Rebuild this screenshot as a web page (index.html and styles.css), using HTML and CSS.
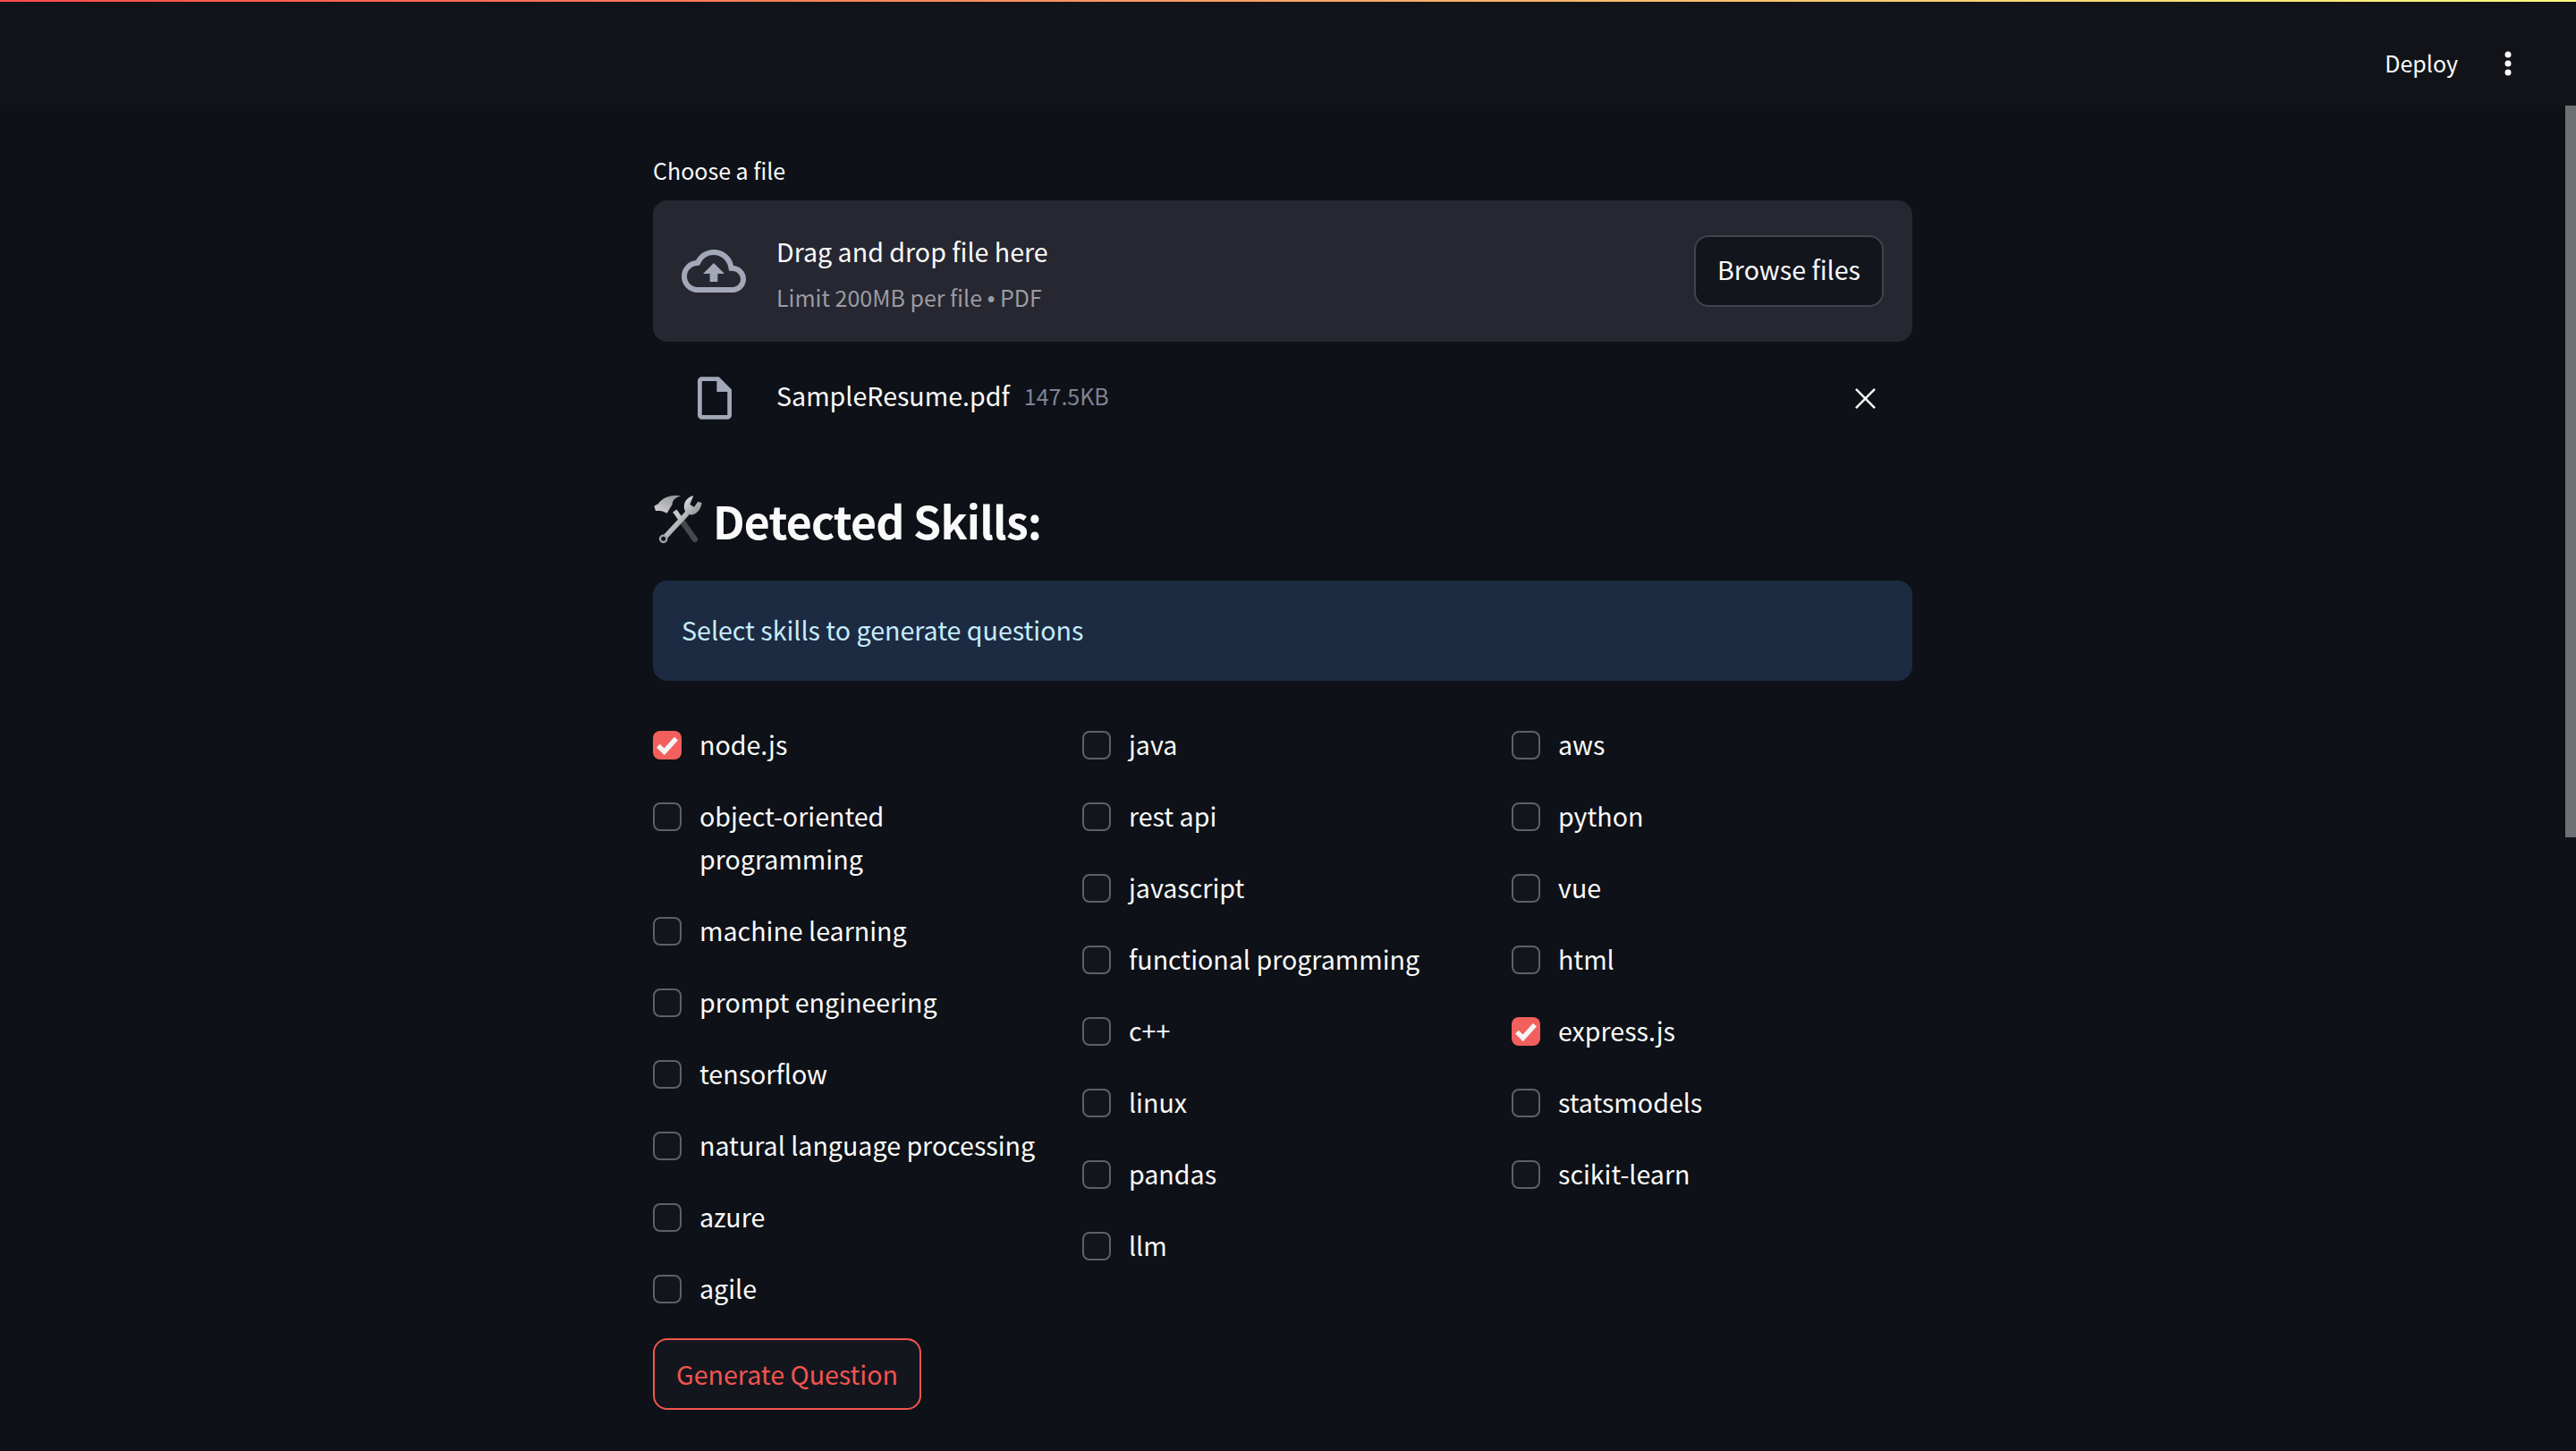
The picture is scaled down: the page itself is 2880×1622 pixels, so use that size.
FILE: index.html
```html
<!DOCTYPE html>
<html lang="en">
<head>
    <meta charset="UTF-8" />
    <title>Resume Skills</title>
    <link rel="stylesheet" href="styles.css">
</head>
<body>

<header class="topbar">
    <span class="deploy">Deploy</span>
    <svg class="menu-dots" viewBox="0 0 8 28"><circle cx="4" cy="4" r="3.5"/><circle cx="4" cy="14" r="3.5"/><circle cx="4" cy="24" r="3.5"/></svg>
</header>
<div class="scrollbar"></div>

<main class="container">
    <div class="upload-label">Choose a file</div>

    <section class="dropzone">
        <svg class="cloud-icon" viewBox="0 0 24 24"><path d="M19.35 10.04A7.49 7.49 0 0 0 12 4C9.11 4 6.6 5.64 5.35 8.04A5.994 5.994 0 0 0 0 14c0 3.31 2.69 6 6 6h13c2.76 0 5-2.24 5-5 0-2.64-2.05-4.78-4.65-4.96zM19 18H6c-2.21 0-4-1.79-4-4 0-2.05 1.53-3.76 3.56-3.97l1.07-.11.5-.95A5.469 5.469 0 0 1 12 6c2.62 0 4.88 1.86 5.39 4.43l.3 1.5 1.53.11A2.98 2.98 0 0 1 22 15c0 1.65-1.35 3-3 3zM8 13h2.55v3h2.9v-3H16l-4-4z"/></svg>
        <div class="drop-text">
            <div class="drop-title">Drag and drop file here</div>
            <div class="drop-limit">Limit 200MB per file <span class="bullet">•</span> PDF</div>
        </div>
        <button class="browse-btn">Browse files</button>
    </section>

    <section class="file-row">
        <svg class="file-icon" viewBox="4 2 16 20"><path d="M14 2H6c-1.1 0-2 .9-2 2v16c0 1.1.89 2 1.99 2H18c1.1 0 2-.9 2-2V8l-6-6zM6 20V4h7v5h5v11H6z"/></svg>
        <span class="file-name">SampleResume.pdf</span>
        <span class="file-size">147.5KB</span>
        <svg class="close-icon" viewBox="0 0 24 24"><path d="M1 1l22 22M23 1L1 23"/></svg>
    </section>

    <h3 class="heading">
        <svg class="tools-icon" viewBox="15 30 168 168">
            <defs>
                <linearGradient id="steel" x1="0" y1="0" x2="1" y2="1">
                    <stop offset="0" stop-color="#e6e6e8"/>
                    <stop offset="1" stop-color="#85868a"/>
                </linearGradient>
                <linearGradient id="steelHead" x1="0" y1="1" x2="1" y2="0">
                    <stop offset="0" stop-color="#d8d8da"/>
                    <stop offset="1" stop-color="#8b8c90"/>
                </linearGradient>
            </defs>
            <path d="M88 84L112 118" stroke="#c9c9cc" stroke-width="16" fill="none"/>
            <path d="M112 118L156 180" stroke="#47484c" stroke-width="19" stroke-linecap="round" fill="none"/>
            <path d="M130 92L52 176" stroke="url(#steel)" stroke-width="17" fill="none"/>
            <circle cx="50" cy="178" r="11" fill="#0e1117" stroke="#a3a4a8" stroke-width="7"/>
            <path d="M151 34C126 38 111 64 125 90C143 106 172 96 179 58L166 53L153 72L139 62Z" fill="url(#steel)"/>
            <path d="M19 68L33 60C48 38 80 27 110 34C92 39 80 48 80 62L62 92C54 88 44 84 37 84L24 84Z" fill="url(#steelHead)"/>
        </svg>
        Detected Skills:
    </h3>

    <div class="info-box">Select skills to generate questions</div>

    <div class="skills-grid">
        <div class="skills-col">
            <label class="skill"><span class="check checked"><svg viewBox="0 0 24 24"><path d="M4.5 12.5l5 5 10-11"/></svg></span><span>node.js</span></label>
            <label class="skill"><span class="check"></span><span>object-oriented<br>programming</span></label>
            <label class="skill"><span class="check"></span><span>machine learning</span></label>
            <label class="skill"><span class="check"></span><span>prompt engineering</span></label>
            <label class="skill"><span class="check"></span><span>tensorflow</span></label>
            <label class="skill"><span class="check"></span><span>natural language processing</span></label>
            <label class="skill"><span class="check"></span><span>azure</span></label>
            <label class="skill"><span class="check"></span><span>agile</span></label>
        </div>
        <div class="skills-col">
            <label class="skill"><span class="check"></span><span>java</span></label>
            <label class="skill"><span class="check"></span><span>rest api</span></label>
            <label class="skill"><span class="check"></span><span>javascript</span></label>
            <label class="skill"><span class="check"></span><span>functional programming</span></label>
            <label class="skill"><span class="check"></span><span>c++</span></label>
            <label class="skill"><span class="check"></span><span>linux</span></label>
            <label class="skill"><span class="check"></span><span>pandas</span></label>
            <label class="skill"><span class="check"></span><span>llm</span></label>
        </div>
        <div class="skills-col">
            <label class="skill"><span class="check"></span><span>aws</span></label>
            <label class="skill"><span class="check"></span><span>python</span></label>
            <label class="skill"><span class="check"></span><span>vue</span></label>
            <label class="skill"><span class="check"></span><span>html</span></label>
            <label class="skill"><span class="check checked"><svg viewBox="0 0 24 24"><path d="M4.5 12.5l5 5 10-11"/></svg></span><span>express.js</span></label>
            <label class="skill"><span class="check"></span><span>statsmodels</span></label>
            <label class="skill"><span class="check"></span><span>scikit-learn</span></label>
        </div>
    </div>

    <button class="generate-btn">Generate Question</button>
</main>

</body>
</html>
```

FILE: styles.css
```css
html, body {
    height: 1622px;
    margin: 0;
    overflow: hidden;
}
body {
    position: relative;
    background: #0e1117;
    color: #fafafa;
    font-family: "Noto Sans CJK SC", "Noto Sans", sans-serif;
    font-size: 28.6px;
    line-height: 48px;
}
button {
    font: inherit;
}
.topbar {
    height: 118px;
    box-sizing: border-box;
    background: #121318;
    border-top: 2px solid transparent;
    border-image: linear-gradient(90deg, #ff4b4b, #fffd80) 1;
    display: flex;
    justify-content: flex-end;
    align-items: center;
    padding: 22px 72px 0 0;
    font-size: 25px;
}
.deploy {
    margin-right: 52px;
    margin-bottom: 3px;
}
.menu-dots {
    width: 8px;
    height: 28px;
    fill: #fafafa;
}
.scrollbar {
    position: absolute;
    top: 118px;
    right: 0;
    width: 12px;
    height: 818px;
    background: #6f7074;
}
.container {
    width: 1408px;
    margin: 0 0 0 730px;
}
.upload-label {
    font-size: 25px;
    line-height: 40px;
    margin-top: 52px;
    margin-bottom: 14px;
}
.dropzone {
    height: 158px;
    box-sizing: border-box;
    background: #262730;
    border-radius: 16px;
    display: flex;
    align-items: center;
    padding: 0 32px;
}
.cloud-icon {
    width: 72px;
    height: 72px;
    flex: none;
    fill: #a3a8b8;
    margin-right: 34px;
}
.drop-text {
    flex: 1;
    padding-top: 4px;
}
.drop-title {
    line-height: 48px;
}
.drop-limit {
    font-size: 25px;
    line-height: 40px;
    margin-top: 7px;
    color: #9a9ba3;
}
.bullet {
    font-family: "Liberation Sans", sans-serif;
}
.browse-btn {
    width: 212px;
    height: 80px;
    padding: 0 0 4px;
    background: #13151d;
    color: #fafafa;
    border: 2px solid #41434d;
    border-radius: 16px;
}
.file-row {
    height: 126px;
    display: flex;
    align-items: center;
    padding-left: 50px;
}
.file-icon {
    width: 38px;
    height: 48px;
    fill: #a3a8b8;
    margin-right: 50px;
}
.file-name {
    margin-right: 16px;
    margin-bottom: 6px;
}
.file-size {
    font-size: 25px;
    color: #808495;
    margin-bottom: 6px;
}
.close-icon {
    width: 23px;
    height: 23px;
    margin-left: auto;
    margin-right: 41px;
    fill: none;
    stroke: #fafafa;
    stroke-width: 2.6;
}
.heading {
    margin: 28px 0 0;
    height: 90px;
    display: flex;
    align-items: center;
    gap: 11px;
    font-size: 50px;
    line-height: 72px;
    font-weight: 700;
    letter-spacing: -0.85px;
}
.tools-icon {
    width: 56px;
    height: 56px;
}
.info-box {
    margin-top: 23px;
    height: 112px;
    box-sizing: border-box;
    padding: 31px 32px 33px;
    background: #1c2b41;
    color: #c7ebff;
    border-radius: 16px;
}
.skills-grid {
    display: grid;
    grid-template-columns: repeat(3, 448px);
    column-gap: 32px;
    margin-top: 47px;
}
.skills-col {
    display: flex;
    flex-direction: column;
    gap: 32px;
}
.skill {
    display: flex;
    gap: 20px;
    align-items: flex-start;
}
.check {
    width: 32px;
    height: 32px;
    box-sizing: border-box;
    flex: none;
    margin-top: 9px;
    background: #13151d;
    border: 2px solid #5e6067;
    border-radius: 8px;
}
.check.checked {
    background: #f25f5c;
    border: none;
}
.check svg {
    display: block;
    fill: none;
    stroke: #f4f4f4;
    stroke-width: 4;
}
.generate-btn {
    margin-top: 32px;
    width: 300px;
    height: 80px;
    padding: 0;
    background: #14161e;
    color: #f25550;
    border: 2px solid #f25550;
    border-radius: 16px;
}
```
